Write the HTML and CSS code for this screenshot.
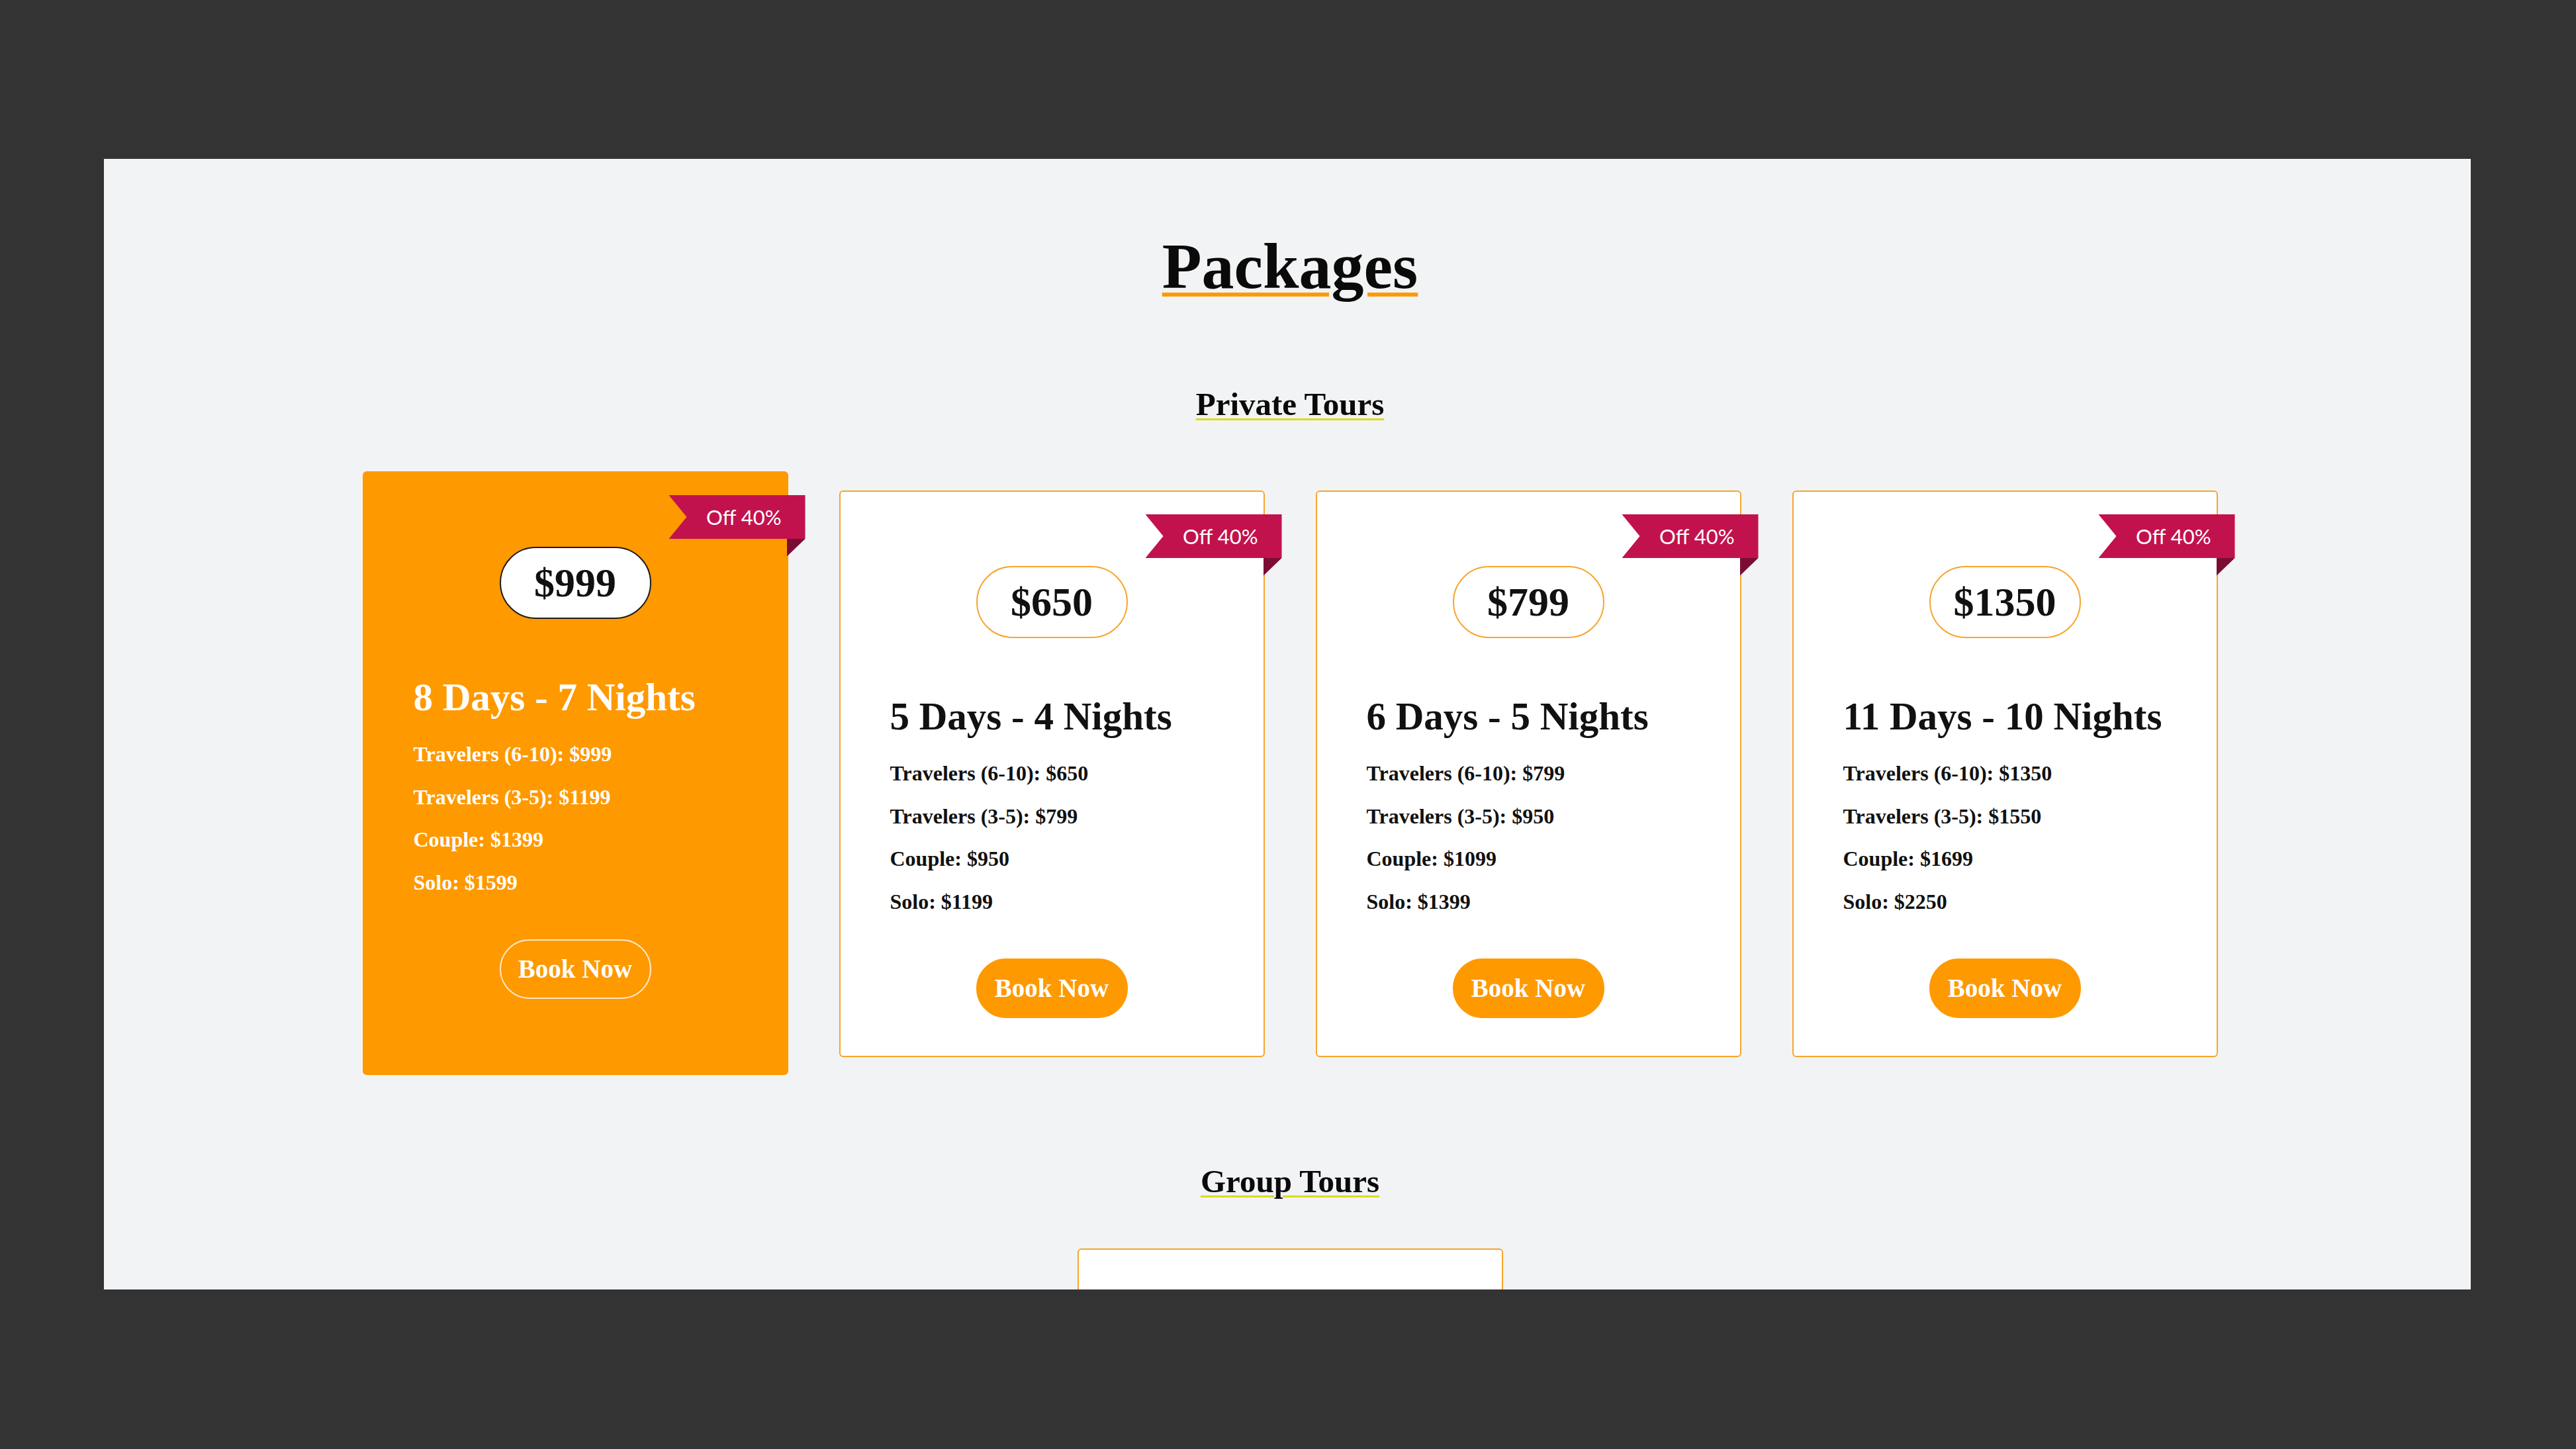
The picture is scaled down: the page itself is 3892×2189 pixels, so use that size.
FILE: index.html
```html
<!DOCTYPE html>
<html lang="en">
<head>
<meta charset="utf-8">
<title>Packages</title>
<link rel="stylesheet" href="styles.css">
</head>
<body>
<div class="page">
  <section class="panel">
    <h1 class="title">Packages</h1>
    <h2 class="subtitle">Private Tours</h2>
    <div class="cards">
      <article class="card featured">
        <div class="ribbon"><div class="band">Off 40%</div><div class="fold"></div></div>
        <div class="price">$999</div>
        <h3 class="card-title">8 Days - 7 Nights</h3>
        <ul class="rates">
          <li>Travelers (6-10): $999</li>
          <li>Travelers (3-5): $1199</li>
          <li>Couple: $1399</li>
          <li>Solo: $1599</li>
        </ul>
        <a class="btn" href="#">Book Now</a>
      </article>
      <article class="card">
        <div class="ribbon"><div class="band">Off 40%</div><div class="fold"></div></div>
        <div class="price">$650</div>
        <h3 class="card-title">5 Days - 4 Nights</h3>
        <ul class="rates">
          <li>Travelers (6-10): $650</li>
          <li>Travelers (3-5): $799</li>
          <li>Couple: $950</li>
          <li>Solo: $1199</li>
        </ul>
        <a class="btn" href="#">Book Now</a>
      </article>
      <article class="card">
        <div class="ribbon"><div class="band">Off 40%</div><div class="fold"></div></div>
        <div class="price">$799</div>
        <h3 class="card-title">6 Days - 5 Nights</h3>
        <ul class="rates">
          <li>Travelers (6-10): $799</li>
          <li>Travelers (3-5): $950</li>
          <li>Couple: $1099</li>
          <li>Solo: $1399</li>
        </ul>
        <a class="btn" href="#">Book Now</a>
      </article>
      <article class="card">
        <div class="ribbon"><div class="band">Off 40%</div><div class="fold"></div></div>
        <div class="price">$1350</div>
        <h3 class="card-title">11 Days - 10 Nights</h3>
        <ul class="rates">
          <li>Travelers (6-10): $1350</li>
          <li>Travelers (3-5): $1550</li>
          <li>Couple: $1699</li>
          <li>Solo: $2250</li>
        </ul>
        <a class="btn" href="#">Book Now</a>
      </article>
    </div>
    <h2 class="subtitle group">Group Tours</h2>
    <div class="group-card"></div>
  </section>
</div>
</body>
</html>
```

FILE: styles.css
```css
* { box-sizing: border-box; }

html, body {
  margin: 0;
  padding: 0;
  background: #333333;
}

body {
  font-family: "Liberation Serif", "DejaVu Serif", serif;
  color: #111;
}

.page {
  height: 2189px;
  padding: 240px 159px 0 157px;
}

.panel {
  height: 1708px;
  overflow: hidden;
  background: #f2f3f4;
  padding-left: 8px;
  display: flex;
  flex-direction: column;
  align-items: center;
}

.title {
  margin: 113px 0 0;
  font-size: 98px;
  line-height: 98px;
  font-weight: 700;
  color: #0a0a0a;
  text-decoration: underline;
  text-decoration-color: #ff9900;
  text-decoration-thickness: 6px;
  text-underline-offset: 7px;
}

.subtitle {
  margin: 135px 0 0;
  font-size: 49px;
  line-height: 49px;
  font-weight: 700;
  color: #0a0a0a;
  text-decoration: underline;
  text-decoration-color: #d9dc1e;
  text-decoration-thickness: 3px;
  text-underline-offset: 5px;
}

.subtitle.group {
  margin-top: 136px;
}

.cards {
  margin-top: 106px;
  display: flex;
  align-items: flex-start;
  gap: 77px;
}

.card {
  position: relative;
  width: 643px;
  background: #ffffff;
  border: 2px solid #f7a52c;
  border-radius: 6px;
  padding: 112px 0 57px;
  display: flex;
  flex-direction: column;
  align-items: center;
}

.card.featured {
  margin-top: -29px;
  padding-bottom: 113px;
  background: #ff9900;
  border-color: #ff9900;
  color: #ffffff;
}

.ribbon {
  position: absolute;
  top: 34px;
  right: -28px;
  width: 206px;
  display: flex;
  flex-direction: column;
}

.band {
  height: 66px;
  background: #c2124d;
  clip-path: polygon(0 0, 100% 0, 100% 100%, 0 100%, 27px 50%);
  color: #fff;
  font-family: "Lato", "Open Sans", sans-serif;
  font-size: 31px;
  font-weight: 400;
  display: flex;
  align-items: center;
  justify-content: flex-end;
  padding-right: 36px;
}

.fold {
  align-self: flex-end;
  width: 28px;
  height: 27px;
  background: #7b0d35;
  clip-path: polygon(0 0, 100% 0, 0 100%);
}

.price {
  width: 229px;
  height: 109px;
  border: 2px solid #f7a52c;
  border-radius: 55px;
  background: #fff;
  display: flex;
  align-items: center;
  justify-content: center;
  font-size: 62px;
  font-weight: 700;
  color: #111;
}

.featured .price {
  border-color: #1c1c1c;
}

.card-title {
  align-self: stretch;
  margin: 89px 0 0;
  padding-left: 75px;
  font-size: 59px;
  line-height: 59px;
  font-weight: 700;
}

.rates {
  align-self: stretch;
  list-style: none;
  margin: 24px 0 0;
  padding: 0 0 0 75px;
  font-size: 32px;
  line-height: 64.7px;
  font-weight: 700;
}

.btn {
  margin-top: 53px;
  width: 229px;
  height: 90px;
  border-radius: 45px;
  background: #ff9900;
  border: 2px solid #ff9900;
  color: #fff;
  text-decoration: none;
  font-size: 39px;
  font-weight: 700;
  display: flex;
  align-items: center;
  justify-content: center;
}

.featured .btn {
  background: transparent;
  border-color: #ffe9c9;
}

.group-card {
  margin-top: 77px;
  width: 643px;
  height: 400px;
  flex: none;
  background: #fff;
  border: 2px solid #f7a52c;
  border-radius: 6px;
}
```
